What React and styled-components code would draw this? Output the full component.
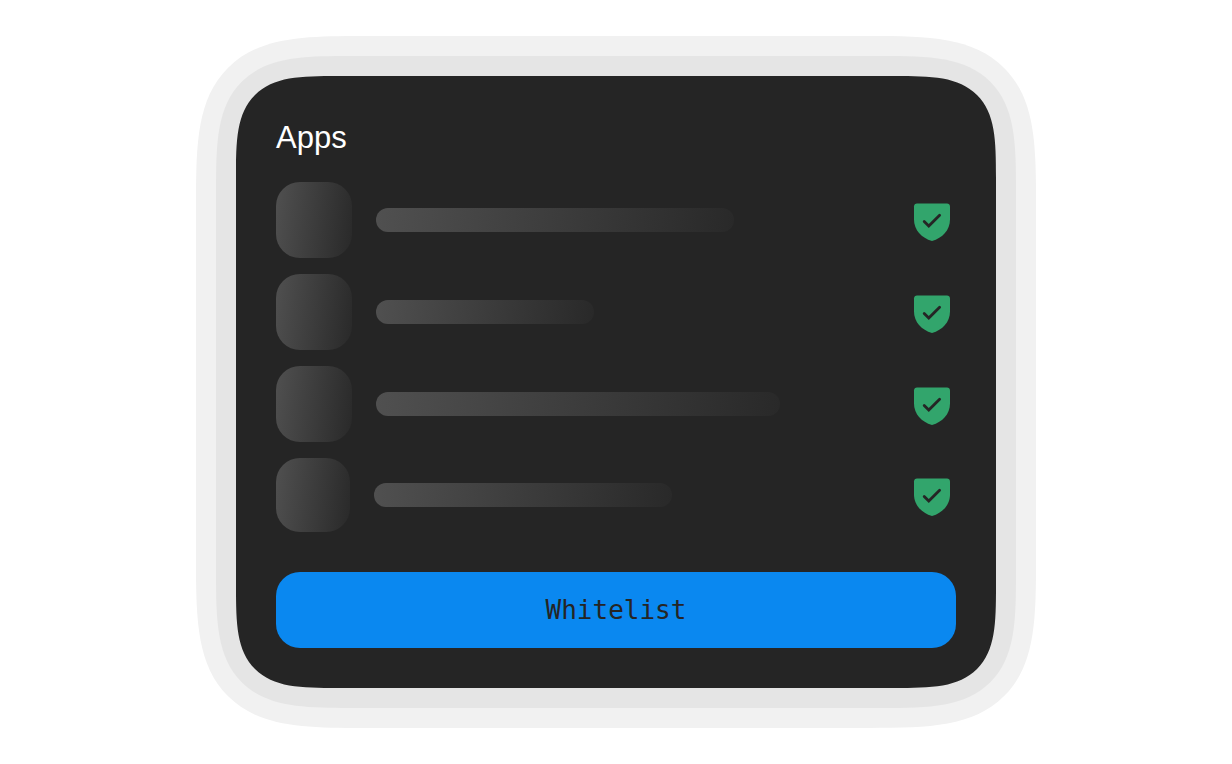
import React from "react";
import styled, { createGlobalStyle } from "styled-components";

const GlobalStyle = createGlobalStyle`
  *, *::before, *::after { box-sizing: border-box; }
  body {
    margin: 0;
    background: #ffffff;
    font-family: "Liberation Sans", Arial, sans-serif;
  }
`;

const Page = styled.main`
  display: flex;
  justify-content: center;
  padding: 36px;
`;

const Ring = styled.div`
  width: 100%;
  max-width: ${(p) => p.$max || "none"};
  padding: 20px;
  background: ${(p) => p.$tone};
  border-radius: ${(p) => p.$radius};
  corner-shape: superellipse(1.7);
`;

const Panel = styled.section`
  padding: 40px;
  background: #252525;
  border-radius: 102px;
  corner-shape: superellipse(1.75);
`;

const Title = styled.h1`
  margin: 0 0 22px;
  color: #ffffff;
  font-size: 31px;
  font-weight: 400;
  line-height: 44px;
`;

const AppList = styled.ul`
  display: flex;
  flex-direction: column;
  gap: 16px;
  margin: 0 0 40px;
  padding: 0;
  list-style: none;
`;

const AppRow = styled.li`
  display: flex;
  align-items: center;
  gap: 24px;
`;

const Skeleton = styled.div`
  background: linear-gradient(97deg, #505050, #292929);
`;

const AppTile = styled(Skeleton)`
  flex: none;
  width: ${(p) => p.$size}px;
  height: ${(p) => p.$size}px;
  border-radius: 24px;
`;

const NameBar = styled(Skeleton)`
  flex: 0 1 ${(p) => p.$width}px;
  height: 24px;
  border-radius: 12px;
`;

const Shield = styled.svg`
  flex: none;
  width: 48px;
  height: 48px;
  margin-left: auto;
`;

const ActionButton = styled.button`
  display: block;
  width: 100%;
  height: 76px;
  padding: 0 24px;
  border: 0;
  border-radius: 24px;
  background: #0a88f0;
  color: #252525;
  font-family: "DejaVu Sans Mono", "Liberation Mono", monospace;
  font-size: 26px;
  line-height: 32px;
  cursor: pointer;
`;

const apps = [
  { id: 1, tile: 76, bar: 358 },
  { id: 2, tile: 76, bar: 218 },
  { id: 3, tile: 76, bar: 404 },
  { id: 4, tile: 74, bar: 298 },
];

function ShieldCheck() {
  return (
    <Shield viewBox="0 0 48 48" aria-hidden="true">
      <path
        fill="#32a56c"
        d="M9 7.5H39C40.7 7.5 42 8.8 42 10.5V23.5C42 34 34.5 42 24 45C13.5 42 6 34 6 23.5V10.5C6 8.8 7.3 7.5 9 7.5Z"
      />
      <path
        d="M16.2 25.4L20.8 30L31.6 19.2"
        fill="none"
        stroke="#252525"
        strokeWidth="2.8"
        strokeLinecap="round"
      />
    </Shield>
  );
}

export default function App() {
  return (
    <>
      <GlobalStyle />
      <Page>
        <Ring $tone="#f1f1f1" $radius="166px" $max="840px">
          <Ring $tone="#e5e5e5" $radius="134px">
            <Panel>
              <Title>Apps</Title>
              <AppList>
                {apps.map((app) => (
                  <AppRow key={app.id}>
                    <AppTile $size={app.tile} />
                    <NameBar $width={app.bar} />
                    <ShieldCheck />
                  </AppRow>
                ))}
              </AppList>
              <ActionButton type="button">Whitelist</ActionButton>
            </Panel>
          </Ring>
        </Ring>
      </Page>
    </>
  );
}
